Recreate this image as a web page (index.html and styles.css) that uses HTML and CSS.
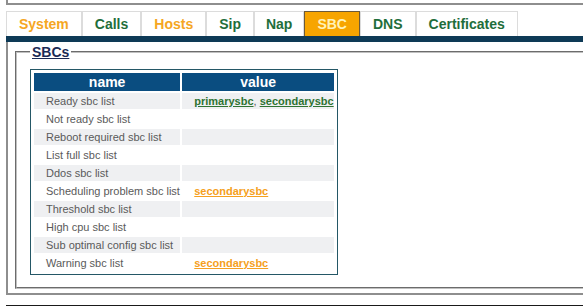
FILE: index.html
```html
<!DOCTYPE html>
<html>
<head>
<meta charset="utf-8">
<link rel="stylesheet" href="styles.css">
</head>
<body>
<div class="page">
  <div class="topbox"></div>
  <ul class="tabs">
    <li class="tab orange">System</li>
    <li class="tab green">Calls</li>
    <li class="tab orange">Hosts</li>
    <li class="tab green">Sip</li>
    <li class="tab green narrow">Nap</li>
    <li class="tab active">SBC</li>
    <li class="tab green">DNS</li>
    <li class="tab green">Certificates</li>
  </ul>
  <div class="bar"></div>
  <div class="panel">
    <fieldset class="group">
      <legend class="legend">SBCs</legend>
      <div class="tablebox">
        <table class="grid">
          <thead>
            <tr><th class="col-name">name</th><th class="col-value">value</th></tr>
          </thead>
          <tbody>
            <tr class="alt"><td>Ready sbc list</td><td><a class="lnk ok" href="#">primarysbc</a>, <a class="lnk ok" href="#">secondarysbc</a></td></tr>
            <tr><td>Not ready sbc list</td><td></td></tr>
            <tr class="alt"><td>Reboot required sbc list</td><td></td></tr>
            <tr><td>List full sbc list</td><td></td></tr>
            <tr class="alt"><td>Ddos sbc list</td><td></td></tr>
            <tr><td>Scheduling problem sbc list</td><td><a class="lnk warn" href="#">secondarysbc</a></td></tr>
            <tr class="alt"><td>Threshold sbc list</td><td></td></tr>
            <tr><td>High cpu sbc list</td><td></td></tr>
            <tr class="alt"><td>Sub optimal config sbc list</td><td></td></tr>
            <tr><td>Warning sbc list</td><td><a class="lnk warn" href="#">secondarysbc</a></td></tr>
          </tbody>
        </table>
      </div>
    </fieldset>
  </div>
  <div class="footer"></div>
</div>
</body>
</html>
```

FILE: styles.css
```css
html, body {
  margin: 0;
  padding: 0;
  background: #ffffff;
  overflow: hidden;
}
body {
  font-family: "Liberation Sans", Arial, sans-serif;
}
.page {
  width: 640px;
  padding-left: 6px;
}
.topbox {
  height: 3px;
  border-left: 2px solid #8e8e8e;
  border-bottom: 2px solid #8e8e8e;
}
.tabs {
  list-style: none;
  margin: 6px 0 0 0;
  padding: 0;
  display: flex;
}
.tab {
  font-size: 14px;
  font-weight: bold;
  line-height: 16px;
  padding: 4px 12px 4px 12px;
  border: 1px solid #dcdcdc;
  border-bottom: none;
}
.tab.narrow {
  padding: 4px 11px 4px 11px;
}
.tab.orange { color: #f5a623; }
.tab.green { color: #1f6e3b; }
.tab.active {
  background: #f7a500;
  color: #fff2b8;
  border-color: #6b5a3a;
}
.bar {
  height: 6px;
  background: #0e3a56;
}
.panel {
  border-left: 2px solid #8e8e8e;
  border-bottom: 2px solid #8e8e8e;
  padding: 2px 0 4px 7px;
}
.group {
  margin: 0;
  padding: 9px 12px 12px 13px;
  border: 2px groove #c0c0c0;
}
.legend {
  font-size: 14px;
  font-weight: bold;
  line-height: 16px;
  color: #1b2a55;
  text-decoration: underline;
  padding: 0 2px;
}
.tablebox {
  width: 306px;
  border: 1px solid #245766;
}
.grid {
  border-collapse: separate;
  border-spacing: 2px;
  margin: 1px;
  width: 304px;
}
.grid th {
  background: #0a4d80;
  color: #ffffff;
  font-size: 14px;
  font-weight: bold;
  line-height: 18px;
  padding: 0;
  text-align: center;
}
.col-name { width: 144px; }
.col-value { width: 150px; }
.grid td {
  font-size: 11px;
  line-height: 16px;
  color: #5a5a5a;
  padding: 0 0 0 12px;
  white-space: nowrap;
}
.grid tr.alt td {
  background: #eff0f2;
}
.lnk {
  font-weight: bold;
  text-decoration: underline;
}
.lnk.ok { color: #2e7332; }
.lnk.warn { color: #f5a020; }
.footer {
  margin-top: 10px;
  height: 4px;
  background: #1a1a1a;
}
```
